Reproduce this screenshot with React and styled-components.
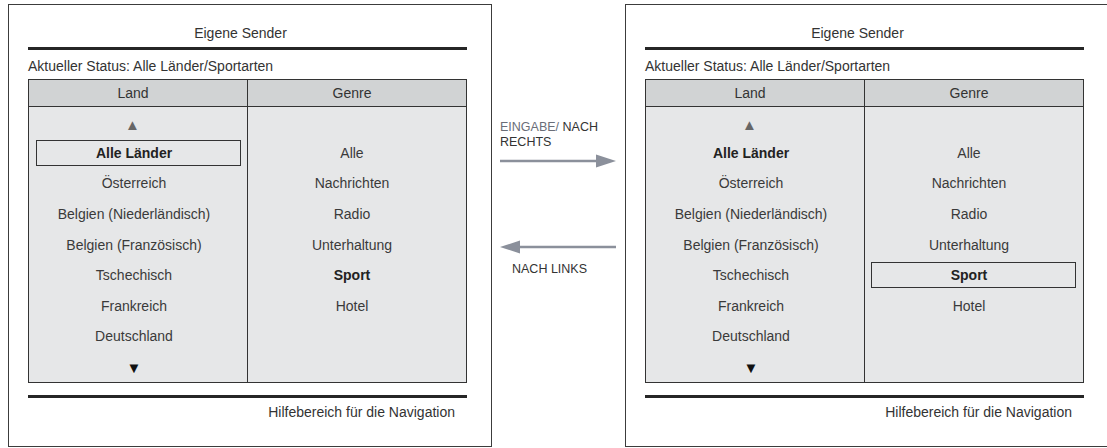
import styled, { createGlobalStyle } from "styled-components";

const GlobalStyle = createGlobalStyle`
  body {
    margin: 0;
    background: #ffffff;
    font-family: "Liberation Sans", Arial, sans-serif;
    color: #333333;
  }
`;

const countries = [
  "Alle Länder",
  "Österreich",
  "Belgien (Niederländisch)",
  "Belgien (Französisch)",
  "Tschechisch",
  "Frankreich",
  "Deutschland",
];

const genres = ["Alle", "Nachrichten", "Radio", "Unterhaltung", "Sport", "Hotel"];

export default function App() {
  return (
    <>
      <GlobalStyle />
      <Page>
        <Screen focusColumn="land" />
        <Middle>
          <Caption>
            <span className="muted">EINGABE/</span> NACH
            <br />
            RECHTS
          </Caption>
          <Arrow direction="right" />
          <Arrow direction="left" />
          <Caption $indent>NACH LINKS</Caption>
        </Middle>
        <Screen focusColumn="genre" />
      </Page>
    </>
  );
}

function Screen({ focusColumn }) {
  return (
    <Panel>
      <Title>Eigene Sender</Title>
      <Status>Aktueller Status: Alle Länder/Sportarten</Status>
      <Table>
        <HeadCell>Land</HeadCell>
        <HeadCell $divider>Genre</HeadCell>
        <Column>
          <Row>
            <Tri $dark={false}>▲</Tri>
          </Row>
          {countries.map((c, i) => (
            <Row key={c}>
              <Item $bold={i === 0} $boxed={i === 0 && focusColumn === "land"}>
                {c}
              </Item>
            </Row>
          ))}
          <Row>
            <Tri $dark>▼</Tri>
          </Row>
        </Column>
        <Column $divider>
          <Row />
          {genres.map((g) => (
            <Row key={g}>
              <Item
                $bold={g === "Sport"}
                $boxed={g === "Sport" && focusColumn === "genre"}
                $shift
              >
                {g}
              </Item>
            </Row>
          ))}
          <Row />
          <Row />
        </Column>
      </Table>
      <Help>Hilfebereich für die Navigation</Help>
    </Panel>
  );
}

function Arrow({ direction }) {
  const right = direction === "right";
  return (
    <ArrowSvg width="116" height="14" viewBox="0 0 116 14" $right={right}>
      {right ? (
        <>
          <line x1="0" y1="7" x2="99" y2="7" stroke="#8b909b" strokeWidth="2.5" />
          <polygon points="96,0.5 116,7 96,13.5" fill="#8b909b" />
        </>
      ) : (
        <>
          <line x1="17" y1="7" x2="116" y2="7" stroke="#8b909b" strokeWidth="2.5" />
          <polygon points="20,0.5 0,7 20,13.5" fill="#8b909b" />
        </>
      )}
    </ArrowSvg>
  );
}

const Page = styled.div`
  display: flex;
  align-items: flex-start;
  padding: 4px 0 0 8px;
  width: 1107px;
  box-sizing: border-box;
  overflow: hidden;
`;

const Panel = styled.section`
  flex: 0 0 484px;
  width: 484px;
  height: 443px;
  box-sizing: border-box;
  border: 1px solid #3c3c3c;
  padding: 0 24px 0 19px;
  display: flex;
  flex-direction: column;
`;

const Title = styled.div`
  padding: 19px 14px 5px 0;
  line-height: 18px;
  font-size: 14px;
  text-align: center;
  color: #333;
  border-bottom: 3px solid #262626;
`;

const Status = styled.div`
  margin: 7px 0 4px;
  line-height: 18px;
  font-size: 14px;
  color: #333;
`;

const Table = styled.div`
  display: grid;
  grid-template-columns: 218px 1fr;
  grid-template-rows: 27px 275px;
  border: 1px solid #333;
  background: #e6e7e8;
`;

const HeadCell = styled.div`
  background: #d1d3d4;
  border-bottom: 1px solid #333;
  border-left: ${(p) => (p.$divider ? "1px solid #333" : "none")};
  padding-right: 10px;
  display: flex;
  align-items: center;
  justify-content: center;
  font-size: 14px;
  color: #333;
`;

const Column = styled.div`
  display: flex;
  flex-direction: column;
  border-left: ${(p) => (p.$divider ? "1px solid #333" : "none")};
`;

const Row = styled.div`
  flex: 1;
  display: flex;
  align-items: center;
  justify-content: center;
`;

const Item = styled.div`
  box-sizing: border-box;
  width: calc(100% - 13px);
  height: 26px;
  margin-left: ${(p) => (p.$shift ? "-1px" : "1px")};
  padding-right: 9px;
  display: flex;
  align-items: center;
  justify-content: center;
  font-size: 14px;
  font-weight: ${(p) => (p.$bold ? 700 : 400)};
  color: ${(p) => (p.$bold ? "#222" : "#3a3a3a")};
  border: 1px solid ${(p) => (p.$boxed ? "#333" : "transparent")};
`;

const Tri = styled.span`
  font-size: 15px;
  line-height: 1;
  margin-top: ${(p) => (p.$dark ? "2px" : "5px")};
  margin-right: ${(p) => (p.$dark ? "8px" : "11px")};
  color: ${(p) => (p.$dark ? "#111" : "#666")};
`;

const Help = styled.div`
  margin-top: 12px;
  border-top: 3px solid #262626;
  padding: 5px 12px 0 0;
  line-height: 18px;
  font-size: 14px;
  text-align: right;
  color: #333;
`;

const Middle = styled.div`
  flex: 0 0 133px;
  box-sizing: border-box;
  padding: 116px 0 0 8px;
  display: flex;
  flex-direction: column;
  align-items: flex-start;
`;

const Caption = styled.div`
  font-size: 12.5px;
  line-height: 14.5px;
  color: #333;
  margin: ${(p) => (p.$indent ? "8px 0 0 12px" : "0")};

  .muted {
    color: #6a6e78;
  }
`;

const ArrowSvg = styled.svg`
  display: block;
  margin-top: ${(p) => (p.$right ? "5px" : "72px")};
`;
